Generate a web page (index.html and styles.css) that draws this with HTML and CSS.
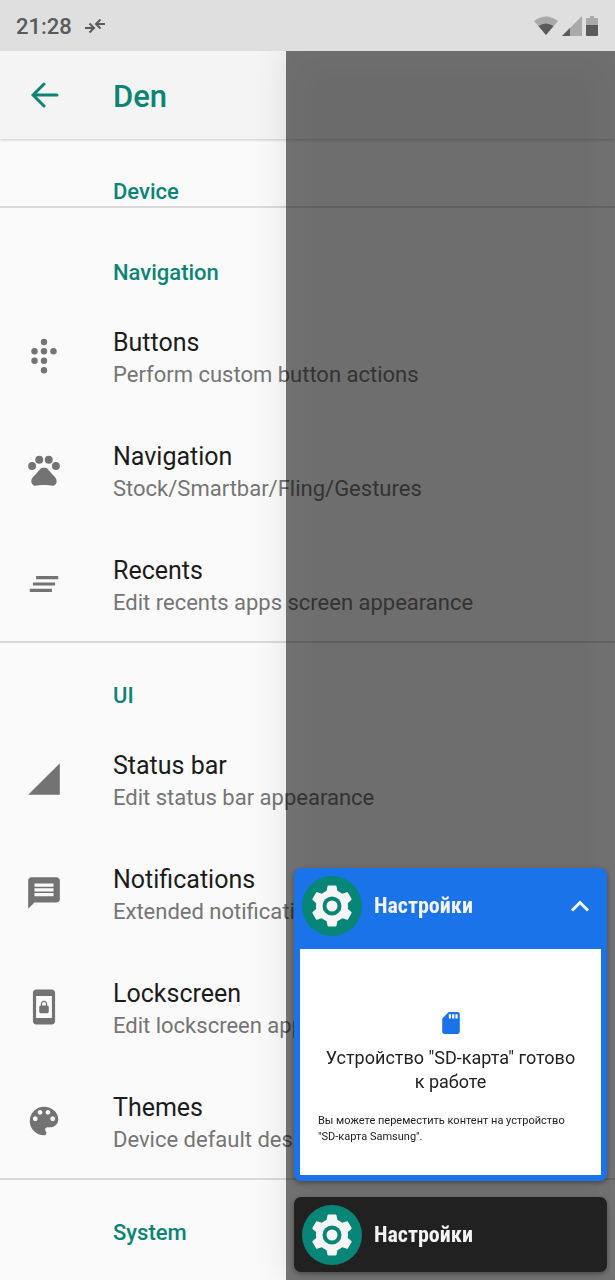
FILE: index.html
```html
<!DOCTYPE html>
<html lang="en">
<head>
<meta charset="utf-8">
<meta name="viewport" content="width=device-width, initial-scale=1">
<title>Den</title>
<link rel="stylesheet" href="styles.css">
</head>
<body>
<div class="statusbar">
  <span class="clock">21:28</span>
  <svg class="sync" viewBox="0 0 22 16" width="22" height="16"><path d="M1 10h8M5.500 5.500L10 10l-4.500 4.500M21 6h-8M16.500 1.500L12 6l4.500 4.500"/></svg>
  <div class="indicators">
    <svg viewBox="0 0 24 20" width="24" height="20"><path class="dim" d="M0 5Q12-4 24 5L12 19z"/><path d="M4.500 10Q12 5 19.500 10L12 19z"/></svg>
    <svg viewBox="0 0 20 20" width="20" height="20"><path class="dim" d="M0 20L20 0v20z"/><path d="M0 20l8-8v8z"/></svg>
    <svg viewBox="0 0 12 20" width="12" height="20"><path class="dim" d="M4 0h4v2h4v8H0V2h4z"/><path d="M0 9h12v10q0 1-1 1H1q-1 0-1-1z"/></svg>
  </div>
</div>

<header class="appbar">
  <button class="back" aria-label="Back"><svg viewBox="0 0 28 26" width="28" height="26"><path d="M26 13H3M13 2L2 13l11 11"/></svg></button>
  <h1>Den</h1>
</header>

<main>
  <section class="group first"><h2>Device</h2></section>
  <section class="group roomy">
    <h2>Navigation</h2>
    <a class="item" href="#">
      <svg class="icon" viewBox="0 0 38 38"><circle cx="19" cy="5" r="3.200"/><circle cx="9.500" cy="14.300" r="3.200"/><circle cx="19" cy="14.300" r="3.200"/><circle cx="28.500" cy="14.300" r="3.200"/><circle cx="9.500" cy="23.800" r="3.200"/><circle cx="19" cy="23.800" r="3.200"/><circle cx="19" cy="33.200" r="3.200"/></svg>
      <span class="text"><span class="title">Buttons</span><span class="summary">Perform custom button actions</span></span>
    </a>
    <a class="item" href="#">
      <svg class="icon" viewBox="0 0 24 24"><circle cx="4.500" cy="9.500" r="2.500"/><circle cx="9" cy="5.500" r="2.500"/><circle cx="15" cy="5.500" r="2.500"/><circle cx="19.500" cy="9.500" r="2.500"/><path d="M17.340 14.860c-.87-1.020-1.600-1.890-2.480-2.910-.46-.54-1.050-1.080-1.750-1.320-.11-.04-.22-.07-.33-.09-.25-.04-.52-.04-.78-.04s-.53 0-.79.050c-.11.020-.22.050-.33.090-.7.240-1.280.780-1.750 1.320-.87 1.020-1.600 1.890-2.480 2.910-1.310 1.310-2.920 2.760-2.620 4.790.29 1.020 1.020 2.030 2.330 2.320.73.150 3.060-.44 5.540-.44h.18c2.480 0 4.810.58 5.540.44 1.310-.29 2.040-1.310 2.330-2.320.31-2.040-1.300-3.490-2.610-4.800z"/></svg>
      <span class="text"><span class="title">Navigation</span><span class="summary">Stock/Smartbar/Fling/Gestures</span></span>
    </a>
    <a class="item" href="#">
      <svg class="icon" viewBox="0 0 24 24"><path d="M5 13h14v-2H5v2zm-2 4h14v-2H3v2zM7 7v2h14V7H7z"/></svg>
      <span class="text"><span class="title">Recents</span><span class="summary">Edit recents apps screen appearance</span></span>
    </a>
  </section>
  <section class="group">
    <h2>UI</h2>
    <a class="item" href="#">
      <svg class="icon" viewBox="0 0 24 24"><path d="M2 22h20V2z"/></svg>
      <span class="text"><span class="title">Status bar</span><span class="summary">Edit status bar appearance</span></span>
    </a>
    <a class="item" href="#">
      <svg class="icon" viewBox="0 0 24 24"><path d="M20 2H4c-1.100 0-1.990.9-1.990 2L2 22l4-4h14c1.100 0 2-.9 2-2V4c0-1.100-.9-2-2-2zm-2 12H6v-2h12v2zm0-3H6V9h12v2zm0-3H6V6h12v2z"/></svg>
      <span class="text"><span class="title">Notifications</span><span class="summary">Extended notifications</span></span>
    </a>
    <a class="item" href="#">
      <svg class="icon" viewBox="0 0 24 24"><path fill-rule="evenodd" d="M7 1h10c1.100 0 2 .9 2 2v18c0 1.100-.9 2-2 2H7c-1.100 0-2-.9-2-2V3c0-1.100.9-2 2-2zm0 4v14h10V5z"/><path fill-rule="evenodd" d="M10 16h4c.55 0 1-.45 1-1v-3c0-.55-.45-1-1-1v-1c0-1.110-.9-2-2-2s-2 .9-2 2v1c-.55 0-1 .45-1 1v3c0 .55.45 1 1 1zm.8-6c0-.66.54-1.200 1.200-1.200s1.200.54 1.200 1.200v1h-2.400z"/></svg>
      <span class="text"><span class="title">Lockscreen</span><span class="summary">Edit lockscreen appearance</span></span>
    </a>
    <a class="item" href="#">
      <svg class="icon" viewBox="0 0 24 24"><path d="M12 3c-4.970 0-9 4.030-9 9s4.030 9 9 9c.83 0 1.500-.67 1.500-1.500 0-.39-.15-.74-.39-1.010-.23-.26-.38-.61-.38-.99 0-.83.67-1.500 1.500-1.500H16c2.760 0 5-2.240 5-5 0-4.420-4.030-8-9-8zm-5.500 9c-.83 0-1.500-.67-1.500-1.500S5.670 9 6.500 9 8 9.670 8 10.500 7.330 12 6.500 12zm3-4C8.670 8 8 7.330 8 6.500S8.670 5 9.500 5s1.500.67 1.500 1.500S10.330 8 9.500 8zm5 0c-.83 0-1.500-.67-1.500-1.500S13.670 5 14.500 5s1.500.67 1.500 1.500S15.330 8 14.500 8zm3 4c-.83 0-1.500-.67-1.500-1.500S16.670 9 17.500 9s1.500.67 1.500 1.500-.67 1.500-1.500 1.500z"/></svg>
      <span class="text"><span class="title">Themes</span><span class="summary">Device default design</span></span>
    </a>
  </section>
  <section class="group"><h2>System</h2></section>
</main>

<aside class="recents">
  <article class="card open">
    <div class="card-head">
      <svg class="app" viewBox="0 0 60 60">
        <g id="settings-gear">
          <circle cx="30" cy="30" r="30"/>
          <g class="gear">
            <circle cx="30" cy="30" r="15"/>
            <path id="teeth" d="M26.500 10.500h7l1.500 7v25l-1.500 7h-7l-1.500-7v-25z"/>
            <use href="#teeth" transform="rotate(60 30 30)"/>
            <use href="#teeth" transform="rotate(120 30 30)"/>
          </g>
          <circle cx="30" cy="30" r="9.500"/>
          <circle class="hub" cx="30" cy="30" r="5.500"/>
        </g>
      </svg>
      <h3>Настройки</h3>
      <button class="collapse" aria-label="Свернуть"><svg viewBox="0 0 20 12" width="20" height="12"><path d="M2 10.500l8-8 8 8"/></svg></button>
    </div>
    <div class="preview">
      <svg class="sd" viewBox="4 2 16 20" width="18" height="22"><path d="M18 2h-8L4.020 8 4 20c0 1.100.9 2 2 2h12c1.100 0 2-.9 2-2V4c0-1.100-.9-2-2-2zm-6 6h-2V4h2v4zm3 0h-2V4h2v4zm3 0h-2V4h2v4z"/></svg>
      <h4>Устройство "SD-карта" готово к&nbsp;работе</h4>
      <p>Вы можете переместить контент на устройство "SD-карта Samsung".</p>
    </div>
  </article>
  <article class="card">
    <div class="card-head">
      <svg class="app" viewBox="0 0 60 60"><use href="#settings-gear"/></svg>
      <h3>Настройки</h3>
    </div>
  </article>
</aside>
</body>
</html>
```
FILE: styles.css
```css
* { box-sizing: border-box; }
body {
  margin: 0;
  background: #fafafa;
  color: #1c1c1c;
  font-family: Roboto, "Noto Sans", sans-serif;
  overflow-x: hidden;
}
h1, h2, h3, h4, p { margin: 0; }
button { padding: 0; border: 0; background: none; display: flex; }

.statusbar {
  position: relative;
  z-index: 3;
  display: flex;
  align-items: center;
  height: 51px;
  padding: 1px 17px 0 16px;
  background: #dfdfdf;
  color: #5a5a5a;
}
.clock { font-size: 22px; font-weight: 500; margin-right: 12px; padding-top: 1px; }
.sync { fill: none; stroke: #5a5a5a; stroke-width: 2; }
.indicators { display: flex; gap: 4px; margin-left: auto; fill: #5a5a5a; }
.indicators .dim { fill: #a9a9a9; }

.appbar {
  display: flex;
  align-items: center;
  height: 88px;
  padding: 0 31px;
  background: #f4f4f4;
  box-shadow: 0 1px 3px rgba(0, 0, 0, .2);
  position: relative;
  color: #0b8573;
}
.back { width: 82px; }
.back svg { fill: none; stroke: #0b8573; stroke-width: 3; stroke-linecap: round; }
.appbar h1 { font-size: 31px; font-weight: 500; padding-top: 2px; }

.group { border-bottom: 2px solid #dadada; }
.group:last-child { border-bottom: 0; }
.group.roomy { padding-top: 12px; }
.group h2 {
  padding: 39px 16px 12px 113px;
  color: #0b8573;
  font-size: 22px;
  line-height: 28px;
  font-weight: 500;
}
.group.first h2 { padding-bottom: 0; }

.item {
  display: flex;
  align-items: center;
  height: 114px;
  padding-left: 25px;
  color: inherit;
  text-decoration: none;
}
.icon { flex: none; width: 38px; height: 38px; margin-right: 50px; fill: #737373; }
.text { display: flex; flex-direction: column; padding-top: 6px; white-space: nowrap; }
.title { font-size: 25px; line-height: 32px; }
.summary { font-size: 22px; line-height: 32px; color: #757575; }

.recents {
  position: fixed;
  z-index: 2;
  top: 51px;
  right: 0;
  bottom: 0;
  width: 329px;
  display: flex;
  flex-direction: column;
  justify-content: flex-end;
  gap: 16px;
  padding: 8px;
  background: rgba(0, 0, 0, .56);
  box-shadow: 0 0 32px rgba(0, 0, 0, .1), inset 0 0 40px rgba(255, 255, 255, .04);
}
.card {
  border-radius: 7px;
  background: #212121;
  color: #f4f4f4;
  box-shadow: 0 2px 5px rgba(0, 0, 0, .35);
}
.card.open { background: #1a73e8; padding: 0 6px 6px; }
.card-head { display: flex; align-items: center; height: 75px; padding: 0 8px; }
.card.open .card-head { height: 81px; padding: 0 11px 6px 2px; }
.app { width: 60px; height: 60px; margin-right: 12px; fill: #078577; }
.gear { fill: #f5f5f5; stroke: #f5f5f5; stroke-width: 2; stroke-linejoin: round; }
.hub { fill: #f5f5f5; }
.card h3 { font-family: "Roboto Condensed", Roboto, sans-serif; font-size: 22px; font-weight: 700; }
.collapse { margin-left: auto; }
.collapse svg { fill: none; stroke: #f4f4f4; stroke-width: 3; }

.preview {
  min-height: 226px;
  padding: 63px 18px 29px;
  background: #fff;
  color: #222;
  display: flex;
  flex-direction: column;
  align-items: center;
}
.sd { fill: #1a73e8; }
.preview h4 { margin: 12px 0 19px; font-size: 18px; line-height: 24px; font-weight: 400; text-align: center; }
.preview p { align-self: stretch; font-size: 11px; line-height: 16px; }
```
